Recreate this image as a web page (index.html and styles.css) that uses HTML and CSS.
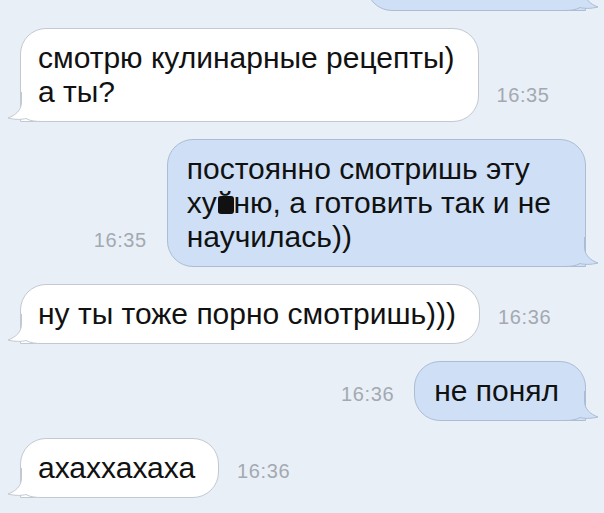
FILE: index.html
```html
<!DOCTYPE html>
<html lang="ru">
<head>
  <meta charset="UTF-8">
  <meta name="viewport" content="width=device-width, initial-scale=1.0">
  <title>Сообщения</title>
  <link rel="stylesheet" href="styles.css">
</head>
<body>
  <div class="chat">

    <div class="row out top">
      <div class="bubble cut">
        <svg class="tail" width="36" height="30" viewBox="0 0 36 30"><path class="tail-fill" d="M15.5 0 V10 C15.5 18 10 23 2 26 C10 28 16 27.5 20 26.5 C24 29 30 29.5 36 29.5 V0 Z"/><path class="tail-line" d="M15.5 0 V10 C15.5 18 10 23 2 26 C10 28 16 27.5 20 26.5 C24 29 30 29.5 36 29.5"/></svg>
      </div>
    </div>

    <div class="row in">
      <div class="bubble">смотрю кулинарные рецепты)<br>а ты?
        <svg class="tail" width="36" height="30" viewBox="0 0 36 30"><path class="tail-fill" d="M15.5 0 V10 C15.5 18 10 23 2 26 C10 28 16 27.5 20 26.5 C24 29 30 29.5 36 29.5 V0 Z"/><path class="tail-line" d="M15.5 0 V10 C15.5 18 10 23 2 26 C10 28 16 27.5 20 26.5 C24 29 30 29.5 36 29.5"/></svg>
      </div>
      <span class="time">16:35</span>
    </div>

    <div class="row out">
      <span class="time">16:35</span>
      <div class="bubble wide">постоянно смотришь эту<br>ху<span class="censor">й</span>ню, а готовить так и не<br>научилась))
        <svg class="tail" width="36" height="30" viewBox="0 0 36 30"><path class="tail-fill" d="M15.5 0 V10 C15.5 18 10 23 2 26 C10 28 16 27.5 20 26.5 C24 29 30 29.5 36 29.5 V0 Z"/><path class="tail-line" d="M15.5 0 V10 C15.5 18 10 23 2 26 C10 28 16 27.5 20 26.5 C24 29 30 29.5 36 29.5"/></svg>
      </div>
    </div>

    <div class="row in">
      <div class="bubble">ну ты тоже порно смотришь)))
        <svg class="tail" width="36" height="30" viewBox="0 0 36 30"><path class="tail-fill" d="M15.5 0 V10 C15.5 18 10 23 2 26 C10 28 16 27.5 20 26.5 C24 29 30 29.5 36 29.5 V0 Z"/><path class="tail-line" d="M15.5 0 V10 C15.5 18 10 23 2 26 C10 28 16 27.5 20 26.5 C24 29 30 29.5 36 29.5"/></svg>
      </div>
      <span class="time">16:36</span>
    </div>

    <div class="row out">
      <span class="time">16:36</span>
      <div class="bubble">не понял
        <svg class="tail" width="36" height="30" viewBox="0 0 36 30"><path class="tail-fill" d="M15.5 0 V10 C15.5 18 10 23 2 26 C10 28 16 27.5 20 26.5 C24 29 30 29.5 36 29.5 V0 Z"/><path class="tail-line" d="M15.5 0 V10 C15.5 18 10 23 2 26 C10 28 16 27.5 20 26.5 C24 29 30 29.5 36 29.5"/></svg>
      </div>
    </div>

    <div class="row in">
      <div class="bubble">ахаххахаха
        <svg class="tail" width="36" height="30" viewBox="0 0 36 30"><path class="tail-fill" d="M15.5 0 V10 C15.5 18 10 23 2 26 C10 28 16 27.5 20 26.5 C24 29 30 29.5 36 29.5 V0 Z"/><path class="tail-line" d="M15.5 0 V10 C15.5 18 10 23 2 26 C10 28 16 27.5 20 26.5 C24 29 30 29.5 36 29.5"/></svg>
      </div>
      <span class="time">16:36</span>
    </div>

  </div>
</body>
</html>
```

FILE: styles.css
```css
body {
  margin: 0;
  background-color: #e9eff7;
  font-family: "Liberation Sans", Arial, sans-serif;
  overflow: hidden;
}
.chat {
  display: flex;
  flex-direction: column;
  gap: 17px;
}
.row {
  display: flex;
  align-items: last baseline;
}
.row.in {
  padding-left: 20px;
  gap: 18px;
}
.row.out {
  justify-content: flex-end;
  padding-right: 18px;
  gap: 20px;
}
.row.top {
  margin-top: -49px;
}
.bubble {
  position: relative;
  z-index: 0;
  font-size: 30px;
  line-height: 34px;
  color: #111;
  background-color: #fff;
  border: 1px solid #c3c9d1;
  border-radius: 26px 26px 26px 0;
  padding: 12px 23px 12px 17px;
}
.out .bubble {
  background-color: #cfe0f6;
  border-color: #abbdd4;
  border-radius: 26px 26px 0 26px;
  padding: 12px 26px 12px 19px;
}
.out .bubble.wide {
  padding-right: 34px;
}
.bubble.cut {
  box-sizing: border-box;
  width: 220px;
  height: 60px;
}
.tail {
  position: absolute;
  z-index: -1;
  left: -15px;
  bottom: -1px;
  overflow: visible;
}
.out .tail {
  left: auto;
  right: -15px;
  transform: scaleX(-1);
}
.tail-fill {
  fill: #fff;
}
.tail-line {
  fill: none;
  stroke: #c3c9d1;
  stroke-width: 1;
}
.out .tail-fill {
  fill: #cfe0f6;
}
.out .tail-line {
  stroke: #abbdd4;
}
.time {
  font-size: 20px;
  letter-spacing: 0.6px;
  color: #a3a9b1;
}
.censor {
  position: relative;
}
.censor::after {
  content: "";
  position: absolute;
  left: 1px;
  right: 0;
  top: 10px;
  bottom: 5px;
  background-color: #111;
  border-radius: 3px;
}
```
